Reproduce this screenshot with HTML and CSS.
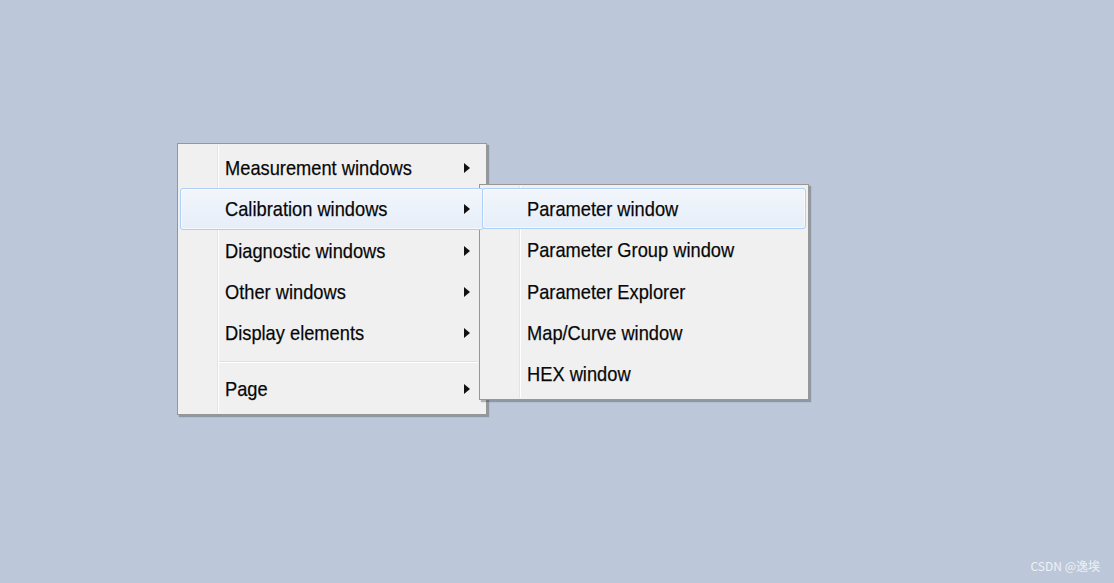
FILE: index.html
```html
<!DOCTYPE html>
<html>
<head>
<meta charset="utf-8">
<link rel="stylesheet" href="styles.css">
</head>
<body>
<div class="desktop">
  <div class="menu main-menu">
    <div class="item"><span class="label">Measurement windows</span><span class="arrow"></span></div>
    <div class="item active"><span class="label">Calibration windows</span><span class="arrow"></span></div>
    <div class="item"><span class="label">Diagnostic windows</span><span class="arrow"></span></div>
    <div class="item"><span class="label">Other windows</span><span class="arrow"></span></div>
    <div class="item"><span class="label">Display elements</span><span class="arrow"></span></div>
    <div class="sep"></div>
    <div class="item"><span class="label">Page</span><span class="arrow"></span></div>
  </div>
  <div class="menu sub-menu">
    <div class="item active"><span class="label">Parameter window</span></div>
    <div class="item"><span class="label">Parameter Group window</span></div>
    <div class="item"><span class="label">Parameter Explorer</span></div>
    <div class="item"><span class="label">Map/Curve window</span></div>
    <div class="item"><span class="label">HEX window</span></div>
  </div>
  <div class="watermark">CSDN @逸埃</div>
</div>
</body>
</html>
```
FILE: styles.css
```css
html, body {
  margin: 0;
  padding: 0;
}
body {
  width: 1114px;
  height: 583px;
  background: #bcc8da;
  overflow: hidden;
  font-family: "Liberation Sans", Arial, sans-serif;
}
.desktop {
  position: relative;
  width: 1114px;
  height: 583px;
}
.menu {
  position: absolute;
  background: #f0f0f0;
  border: 1px solid #979797;
  box-shadow: 2px 2px 1px rgba(60, 60, 60, 0.35);
  padding: 3px 2px;
  box-sizing: border-box;
}
.menu::before {
  content: "";
  position: absolute;
  top: 1px;
  bottom: 1px;
  width: 1px;
  background: #e2e3e3;
  box-shadow: 1px 0 0 #ffffff;
}
.main-menu {
  left: 177px;
  top: 143px;
  width: 310px;
  height: 272px;
}
.main-menu::before { left: 39px; }
.sub-menu {
  left: 479px;
  top: 184px;
  width: 330px;
  height: 216px;
}
.sub-menu::before { left: 39px; }
.item {
  position: relative;
  height: 41.3px;
  display: flex;
  align-items: center;
  box-sizing: border-box;
  border: 1px solid transparent;
  border-radius: 3px;
  padding-left: 44px;
  padding-right: 13px;
  font-size: 21px;
  color: #050505;
  -webkit-text-stroke: 0.25px #1a1a1a;
  z-index: 1;
}
.item .label {
  flex: 1;
  white-space: nowrap;
  margin-top: 1px;
  transform: scaleX(0.87);
  transform-origin: left center;
}
.item.active {
  border-color: #aecff7;
  background: linear-gradient(#f2f6fb, #e6eef9);
  box-shadow: inset 0 0 0 1px rgba(255, 255, 255, 0.6);
}
.arrow {
  width: 0;
  height: 0;
  margin-top: 1px;
  border-top: 5px solid transparent;
  border-bottom: 5px solid transparent;
  border-left: 6px solid #111;
}
.sep {
  position: relative;
  margin: 8px 6px 5px 39px;
  height: 1px;
  background: #e0e0e0;
  box-shadow: 0 1px 0 #ffffff;
  z-index: 1;
}
.sub-menu .item {
  padding-left: 44px;
}
.watermark {
  position: absolute;
  right: 14px;
  bottom: 9px;
  font-size: 12px;
  color: #eef1f6;
  font-family: "Noto Sans CJK SC", "Liberation Sans", sans-serif;
}
```
